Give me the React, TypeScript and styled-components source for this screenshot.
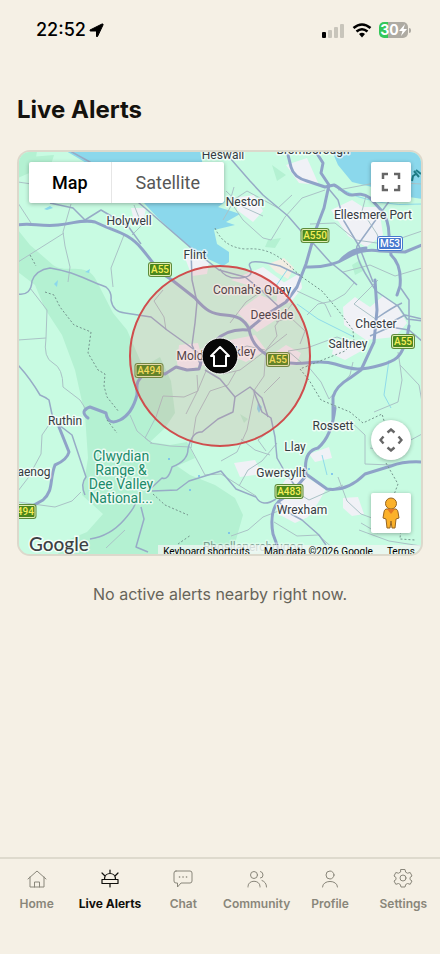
import React from "react";
import styled, { createGlobalStyle, css } from "styled-components";

const Global = createGlobalStyle`
  * { box-sizing: border-box; }
  body { margin: 0; background: #f5f0e5; }
  button { font: inherit; border: 0; padding: 0; cursor: pointer; }
`;

const Page = styled.div`
  min-height: 100vh;
  display: flex;
  flex-direction: column;
  background: #f5f0e5;
  font-family: Inter, "Liberation Sans", sans-serif;
  color: #14120d;
`;

const StatusBar = styled.header`
  display: flex;
  align-items: center;
  justify-content: space-between;
  height: 60px;
  padding: 0 29px 0 36px;
`;

const StatusGroup = styled.div<{ $gap: number }>`
  display: flex;
  align-items: center;
  gap: ${(p) => p.$gap}px;
`;

const Time = styled.time`
  font-size: 18px;
  font-weight: 500;
  line-height: 24px;
  color: #000;
`;

const Battery = styled.div`
  display: flex;
  align-items: center;
  gap: 1px;
`;

const BatteryBody = styled.div`
  display: flex;
  align-items: center;
  justify-content: center;
  width: 29px;
  height: 16px;
  border-radius: 5px;
  background: linear-gradient(90deg, #34c759 30%, #aeaba3 30%);
  color: #fff;
  font-size: 14px;
  font-weight: 700;
  line-height: 16px;
`;

const BatteryCap = styled.span`
  width: 2px;
  height: 5px;
  border-radius: 0 2px 2px 0;
  background: #aeaba3;
`;

const Main = styled.main`
  flex: 1;
  padding: 32px 17px 0;
`;

const Title = styled.h1`
  margin: 0 0 23px;
  font-size: 24px;
  line-height: 35px;
  font-weight: 700;
`;

const MapCard = styled.section`
  position: relative;
  aspect-ratio: 1;
  overflow: hidden;
  border: 2px solid #dcd9cc;
  border-radius: 13px;
  background: #c6fae0;
  font-family: Roboto, "Liberation Sans", sans-serif;
`;

const MapSvg = styled.svg`
  display: block;
  width: 100%;
  height: 100%;
`;

const MapTypes = styled.div`
  position: absolute;
  top: 10px;
  left: 10px;
  display: flex;
  height: 41px;
  border-radius: 2px;
  background: #fff;
  box-shadow: 0 1px 4px rgba(0, 0, 0, 0.3);
`;

const MapType = styled.button<{ $active?: boolean }>`
  padding: 0 24px;
  background: transparent;
  font-size: 18px;
  color: #565656;
  ${(p) =>
    p.$active &&
    css`
      padding: 0 23px;
      border-right: 1px solid #e6e6e6;
      font-weight: 500;
      color: #000;
    `}
`;

const MapControl = styled.button<{ $top?: number; $bottom?: number; $round?: boolean }>`
  position: absolute;
  right: 10px;
  ${(p) => (p.$top !== undefined ? `top: ${p.$top}px;` : `bottom: ${p.$bottom}px;`)}
  display: grid;
  place-items: center;
  width: 40px;
  height: 40px;
  border-radius: ${(p) => (p.$round ? "50%" : "2px")};
  background: #fff;
  box-shadow: 0 1px 4px rgba(0, 0, 0, 0.3);
`;

const GoogleMark = styled.a`
  position: absolute;
  left: 10px;
  bottom: -2px;
  font-family: Lato, sans-serif;
  font-size: 19px;
  font-weight: 500;
  line-height: 24px;
  color: #3c4043;
  text-decoration: none;
  -webkit-text-stroke: 3px rgba(255, 255, 255, 0.8);
  paint-order: stroke fill;
`;

const Attribution = styled.div`
  position: absolute;
  right: 0;
  bottom: 0;
  display: flex;
  gap: 14px;
  height: 9px;
  padding: 0 6px 0 5px;
  overflow: hidden;
  background: rgba(245, 245, 245, 0.7);
  font-size: 10px;
  line-height: 14px;
  color: #000;
`;

const AttributionButton = styled.button`
  height: 14px;
  background: transparent;
  color: #000;
`;

const AttributionLink = styled.a`
  color: #000;
  text-decoration: none;
`;

const Empty = styled.p`
  margin: 26px 0 0;
  text-align: center;
  font-size: 16px;
  line-height: 24px;
  color: #67645a;
`;

const TabBar = styled.nav`
  display: grid;
  grid-template-columns: repeat(6, 1fr);
  padding: 9px 0 41px;
  border-top: 2px solid #dedacd;
`;

const Tab = styled.a<{ $active?: boolean }>`
  display: flex;
  flex-direction: column;
  align-items: center;
  gap: 6px;
  height: 45px;
  font-size: 12px;
  font-weight: ${(p) => (p.$active ? 700 : 600)};
  line-height: 16px;
  white-space: nowrap;
  text-decoration: none;
  color: ${(p) => (p.$active ? "#100f0b" : "#89867a")};
`;

const TabIcon = styled.svg`
  width: 22px;
  height: 22px;
  flex: none;
  fill: none;
  stroke: currentColor;
  stroke-linecap: round;
  stroke-linejoin: round;
`;

const majorRoads = [
  "M18 225C30 222 40 227 58 225S84 219 95 222C115 232 128 232 142 249S158 272 172 280L195 298C206 311 212 314 225 315S244 319 249 329C252 347 266 357 284 362S316 358 335 364S360 371 381 365S400 353 406 343L409 326",
  "M288 155L291 167C293 175 300 179 307 181L325 187L334 185C341 188 346 196 352 195S363 193 370 198L381 210Q389 220 389 235L391 255Q402 265 400 286L397 295",
  "M316 152L323 163L321 173L329 185L324 208L316 229L306 264L297 287L286 302L266 315L249 329",
  "M306 267Q330 268 346 258T380 251L405 252L422 245M340 261Q350 249 366 248",
  "M88 418Q79 411 90 407L106 413Q108 426 120 420T137 395L137 385Q138 377 150 371L165 374L176 367L187 370L199 369Q202 354 215 341T248 330",
  "M59 427L69 452Q67 460 55 465C49 481 54 490 43 500L18 514",
  "M333 420L333 397Q336 386 350 378L361 370L374 342L377 310L375 280M335 408Q332 436 318 448Q303 451 306 474L327 489Q347 492 365 474L391 466Q404 461 422 462",
  "M305 477Q292 493 279 501Q269 511 273 534L280 553",
];

const mediumRoads = [
  "M357 246Q355 256 365 273L376 291L398 306L407 319L422 321M400 287L409 300L409 327M386 325L405 315L422 319M377 318Q393 307 402 303M370 336L390 327L409 330L422 341",
  "M230 158L250 181L263 195L288 216L301 231L313 243L330 262L345 274L357 285",
  "M328 188L338 200L344 221L359 246L373 282M390 200L357 246",
  "M18 294Q31 296 32 281Q36 270 50 268C75 272 84 279 106 287Q112 292 111 300Q113 312 125 313L151 317L167 330L188 345L205 358",
  "M59 425L72 435L86 477Q80 484 85 495",
  "M18 365Q30 378 40 395Q45 397 49 400L53 419",
  "M70 151L90 162L145 208L191 248L219 270L245 277L260 289L278 306",
  "M220 269Q225 279 240 278T250 267T280 266L301 276",
  "M191 250L192 280L197 302L195 323L192 345L201 366",
  "M148 491L162 478Q168 481 172 467Q188 461 188 449Q192 431 202 432L218 419L233 412L235 397",
  "M152 491L177 490L189 481L221 471L236 489L256 497Q262 508 276 499",
  "M254 392L262 412L271 418L275 437L277 458L285 472L301 494",
  "M90 539Q110 536 124 520T135 500M141 507L144 519L136 547L148 552",
  "M205 370L220 379L235 397L250 387L262 398L268 417",
  "M279 502L291 514L302 520L319 535L326 545",
  "M50 203L73 208L85 220L101 210L128 226L141 244",
];

const minorRoads = [
  "M18 182L45 186L52 204M18 203L31 223",
  "M71 204L63 232L65 246L70 267L68 282M64 233L18 262",
  "M124 235L111 268L113 287M134 205L142 225L132 235",
  "M223 220L235 199L247 191L278 208L292 195M226 191L243 207L263 216",
  "M234 187L230 201L243 220L263 238L271 240L285 217L302 198L325 190",
  "M310 224L335 223L356 240L384 244L422 231",
  "M366 196L362 211L377 234L382 250M338 190L380 182L422 184",
  "M18 340L46 338Q43 358 53 363T63 387L80 400L87 411",
  "M30 288L47 310L46 338M53 419L42 435L41 454L28 478L18 491",
  "M18 502L55 507L72 501L81 492",
  "M163 290L154 301L164 317L166 330",
  "M197 375L198 391L184 397L163 396L156 417L145 438L152 443",
  "M206 371L198 390L186 414M223 374L240 370L264 352L287 334",
  "M236 371L228 385L210 391L196 417L191 448",
  "M253 392L264 376L266 350L277 336L275 326L292 304",
  "M255 390L247 430L237 452L221 461",
  "M190 447L205 475L221 474L256 496M130 415L137 431L150 442",
  "M277 443L262 461L248 470L239 486M271 430L258 440L266 451",
  "M307 365L321 382L329 399L350 375L353 362",
  "M302 363L288 351L307 348L337 337L358 345",
  "M398 352L400 365L419 385L422 402M400 365L402 380L398 402L374 412",
  "M349 420L365 435L365 464L391 465M422 434L390 451L370 448",
  "M307 315L318 304L333 301L345 294L354 283",
  "M338 477L347 501L361 514L372 518L378 533L361 523",
  "M291 489L309 500L343 485M274 522L297 536L318 535L335 550",
  "M241 439L255 450L270 455M150 443L170 446L190 447",
  "M234 350L247 346L265 350M230 323L246 302L265 289L279 292",
  "M276 322L290 317L305 331L300 344M297 291L325 304L331 317",
  "M343 272L370 265L395 276L422 268M378 280L354 304L377 320",
  "M231 536L248 530L263 517L281 510M359 530L389 541L421 546",
  "M106 548L125 530M280 377L264 393",
];

const border = [
  "M215 228Q224 248 246 249Q269 247 286 263L302 277L322 291L338 310L353 330L354 342L345 351L300 369L309 380L321 400L350 412L363 423L382 414L385 424",
  "M386 463L398 484L392 500L402 514L400 539L415 540",
  "M45 292L54 295L60 307L74 325L91 332L88 353L98 370L105 374L104 386L107 397L119 412",
  "M30 255L36 266M153 494L165 505L188 515M107 420L117 433M178 544L191 535",
];

const towns = [
  "M286 165L307 158L319 185L299 183Z",
  "M239 197L254 195L263 211L253 222L237 210Z",
  "M331 210L352 200L363 207L379 207L383 235L366 247L348 236Z",
  "M343 307L355 297L370 307L383 296L397 306L407 323L395 337L366 340L344 325Z",
  "M335 341L358 341L363 350L345 360L332 354Z",
  "M286 479L306 477L326 489L318 503L308 517L295 523L280 515L277 492Z",
  "M234 463L255 460L262 474L240 477Z",
  "M343 498L358 497L364 514L352 516L343 508Z",
  "M179 345L198 343L204 365L184 371L177 364Z",
  "M230 340L255 335L266 350L246 362L232 356Z",
  "M231 280L263 267L289 286L278 293L257 288Z",
  "M237 312L260 295L282 304L274 321L257 332L250 325Z",
  "M267 358L286 345L301 353L296 365L280 366Z",
  "M131 208L146 208L143 224L135 225Z",
  "M183 253L209 262L207 274L192 276Z",
  "M278 286L300 273L302 288L291 302L276 307Z",
  "M309 454L329 447L332 458L315 462Z",
];

type Place = { name: string; x: number; y: number; faded?: boolean };
const places: Place[] = [
  { name: "Heswall", x: 223, y: 159 },
  { name: "Bromborough", x: 313, y: 154 },
  { name: "Neston", x: 245, y: 206 },
  { name: "Ellesmere Port", x: 373, y: 219 },
  { name: "Holywell", x: 129, y: 225 },
  { name: "Flint", x: 195, y: 259 },
  { name: "Connah's Quay", x: 252, y: 294 },
  { name: "Deeside", x: 272, y: 319 },
  { name: "Chester", x: 376, y: 328 },
  { name: "Saltney", x: 348, y: 348 },
  { name: "Mold", x: 190, y: 360 },
  { name: "Buckley", x: 235, y: 356 },
  { name: "Ruthin", x: 65, y: 425 },
  { name: "aenog", x: 34, y: 476 },
  { name: "Rossett", x: 333, y: 430 },
  { name: "Llay", x: 295, y: 451 },
  { name: "Gwersyllt", x: 281, y: 477 },
  { name: "Wrexham", x: 302, y: 514 },
  { name: "Rhosllanerchrugog", x: 253, y: 551, faded: true },
];

const shields = [
  { name: "A55", x: 160, y: 270, w: 20 },
  { name: "A550", x: 315, y: 236, w: 25 },
  { name: "M53", x: 390, y: 244, w: 22, blue: true },
  { name: "A55", x: 403, y: 342, w: 20 },
  { name: "A55", x: 278, y: 360, w: 20 },
  { name: "A494", x: 149, y: 371, w: 25 },
  { name: "A483", x: 289, y: 492, w: 25 },
  { name: "A494", x: 22, y: 512, w: 25 },
];

const Label = styled.text`
  font-size: 12px;
  fill: #363b42;
  stroke: #fff;
  stroke-width: 3px;
  stroke-opacity: 0.7;
  stroke-linejoin: round;
  paint-order: stroke;
  text-anchor: middle;
`;

const ParkLabel = styled(Label)`
  font-size: 14px;
  fill: #1b8a6b;
`;

const ShieldText = styled.text<{ $blue?: boolean }>`
  font-size: 10px;
  font-weight: 500;
  fill: ${(p) => (p.$blue ? "#fff" : "#f5ee5a")};
  text-anchor: middle;
`;

function MapDrawing() {
  return (
    <MapSvg viewBox="19 152 402 402" preserveAspectRatio="xMidYMid slice" role="img" aria-label="Map of nearby alerts">
      <rect x="10" y="140" width="430" height="430" fill="#c8fbe2" />
      <g fill="#b4f1d2">
        <path d="M18 230L30 245L53 265C65 274 85 262 95 278L113 313L127 330L143 367L160 357L171 381L175 413L165 428L150 442L170 445L187 442L195 458L177 466L190 475L215 485L235 498L243 515L232 554H58L63 542L87 532L103 514L82 495L88 458L85 415L75 370L62 335L45 309L35 285L18 272Z" />
        <path d="M18 151H37L34 171L18 178ZM30 157L54 155L50 168L37 169Z" />
        <path d="M268 240L281 238L275 248L265 247ZM352 265L360 260L365 270L355 275ZM272 165L286 175L277 181ZM240 414L248 419L244 423Z" />
      </g>
      <g fill="#f0f1f6">
        {towns.map((d) => <path key={d} d={d} />)}
      </g>
      <path d="M268 264L284 258L294 268L288 279L276 272Z" fill="#f3ede3" />
      <g fill="#8bd8ec">
        <path d="M66 151H200L203 166L225 202L218 207L231 211L240 214L226 222L235 225L214 230L217 244L229 252L229 262L223 266L204 257L190 247L172 231L158 218L144 203L110 177Z" />
        <path d="M332 151H422V199L402 196L372 187L352 182L338 165Z" />
        <path d="M44 209L50 206L53 208L47 210ZM85 272L90 269L89 273ZM54 284L58 280L57 287ZM258 402L262 407L259 413L257 409Z" />
      </g>
      <path
        d="M297 304L318 319L354 337M339 188Q374 208 422 204M389 360L384 395L391 408M327 475L322 455M276 286L287 270"
        fill="none"
        stroke="#8fdbea"
        strokeWidth="1"
      />
      <g fill="#6fb8ef">
        <circle cx="169" cy="459" r="1" /><circle cx="190" cy="490" r="1" /><circle cx="199" cy="476" r="1" />
        <circle cx="309" cy="469" r="1" /><circle cx="332" cy="474" r="1" /><circle cx="229" cy="533" r="1" />
      </g>
      <g fill="none" stroke="#aac2c6" strokeWidth="1" strokeLinejoin="round">
        {minorRoads.map((d) => <path key={d} d={d} />)}
      </g>
      <g fill="none" stroke="#97abc6" strokeWidth="1.5" strokeLinejoin="round">
        {mediumRoads.map((d) => <path key={d} d={d} />)}
      </g>
      <g fill="none" stroke="#8fa3c8" strokeWidth="3" strokeLinejoin="round" strokeLinecap="round">
        {majorRoads.map((d) => <path key={d} d={d} />)}
      </g>
      <g fill="none" stroke="#74948d" strokeWidth="1" strokeDasharray="2 2">
        {border.map((d) => <path key={d} d={d} />)}
      </g>
      <path d="M412 181L413 176L416 174M414 171L419 177M416 170L421 174" stroke="#207e88" strokeWidth="2" fill="none" />
      {places.map((p) => (
        <Label key={p.name} x={p.x} y={p.y} opacity={p.faded ? 0.45 : 1}>{p.name}</Label>
      ))}
      {["Clwydian", "Range &", "Dee Valley", "National..."].map((line, i) => (
        <ParkLabel key={line} x="121" y={461 + i * 14}>{line}</ParkLabel>
      ))}
      {shields.map((s) => (
        <g key={s.name + s.x}>
          <rect x={s.x - s.w / 2 - 2} y={s.y - 8} width={s.w + 4} height="15" rx="3" fill={s.blue ? "#4779cf" : "#5d8b3b"} />
          <rect x={s.x - s.w / 2 - 1} y={s.y - 7} width={s.w + 2} height="13" rx="2" fill={s.blue ? "#fff" : "#e3eeb4"} />
          <rect x={s.x - s.w / 2} y={s.y - 6} width={s.w} height="11" rx="1" fill={s.blue ? "#4779cf" : "#4a861c"} />
          <ShieldText $blue={s.blue} x={s.x} y={s.y + 3}>{s.name}</ShieldText>
        </g>
      ))}
      <circle cx="220" cy="356" r="90" fill="#e56f6f" fillOpacity="0.17" stroke="#cf4d4d" strokeWidth="2" />
      <circle cx="220" cy="356" r="18" fill="#080808" stroke="#fff" strokeWidth="1" />
      <path d="M211 356L220 347L229 356H226V366H214V356Z" fill="none" stroke="#fff" strokeWidth="2" strokeLinejoin="round" />
    </MapSvg>
  );
}

const tabs = [
  { label: "Home", icon: <path d="M2 11L11 3L20 11M4 9V19H18V9M8.5 19V14H13.5V19" /> },
  {
    label: "Live Alerts",
    active: true,
    icon: <path strokeWidth="1.2" d="M11 2V5M3 5L5.5 7.5M19 5L16.5 7.5M5.5 11.5C5.5 3.5 16.5 3.5 16.5 11.5M3 11.5H19V15.5H3ZM11 15.5V19" />,
  },
  {
    label: "Chat",
    icon: (
      <>
        <path d="M4 3H18Q20 3 20 5V13Q20 15 18 15H9L5.5 19V15H4Q2 15 2 13V5Q2 3 4 3Z" />
        <path strokeWidth="1.6" d="M7.5 9H7.6M11 9H11.1M14.5 9H14.6" />
      </>
    ),
  },
  {
    label: "Community",
    icon: (
      <>
        <circle cx="8" cy="7" r="3.5" />
        <path d="M2 19V18.5C2 11.500 14 11.500 14 18.5V19M14.5 3.5Q17 4 17 7T14.5 10M16 12.5Q20.5 14 20.5 19" />
      </>
    ),
  },
  {
    label: "Profile",
    icon: (
      <>
        <circle cx="11" cy="7" r="4" />
        <path d="M3.5 19C3.5 11.5 18.5 11.5 18.5 19" />
      </>
    ),
  },
  {
    label: "Settings",
    icon: (
      <>
        <circle cx="11" cy="10" r="3" />
        <path d="M9 1.5H13L13.7 4.2L15.5 5.2L18.2 4.500L20 8L18 9.5V11.5L20 13L18.2 16.3L15.5 15.5L13.7 16.5L13 19H9L8.3 16.5L6.5 15.5L3.8 16.3L2 13L4 11.5V9.5L2 8L3.8 4.5L6.5 5.2L8.3 4.2Z" />
      </>
    ),
  },
];

export default function App() {
  return (
    <Page>
      <Global />
      <StatusBar>
        <StatusGroup $gap={3}>
          <Time>22:52</Time>
          <svg width="15" height="15" viewBox="0 0 15 15" aria-label="Location in use">
            <path d="M1 7L13 1Q14.5 0.5 14 2L8.5 13.5Q8 14.5 7.5 13.5V8H1.5Q0.5 7.500 1 7Z" fill="#000" stroke="#000" strokeLinejoin="round" />
          </svg>
        </StatusGroup>
        <StatusGroup $gap={7}>
          <svg width="23" height="15" viewBox="0 0 23 15" aria-label="Signal">
            <rect x="0" y="9" width="4" height="6" rx="1" fill="#000" />
            <rect x="6" y="7" width="4" height="8" rx="1" fill="#c8c5bb" />
            <rect x="12" y="4" width="4" height="11" rx="1" fill="#c8c5bb" />
            <rect x="18" y="1" width="4" height="14" rx="1" fill="#c8c5bb" />
          </svg>
          <svg width="20" height="15" viewBox="0 0 20 15" aria-label="Wi-Fi">
            <path d="M1.5 5Q10 -2 18.5 5M4.5 8.5Q10 4 15.5 8.5" fill="none" stroke="#000" strokeWidth="2.6" />
            <path d="M7 11Q10 8.5 13 11L10 14.5Z" fill="#000" />
          </svg>
          <Battery>
            <BatteryBody>
              30
              <svg width="8" height="12" viewBox="0 0 8 12" aria-label="Charging">
                <path d="M6 0L0 7H3.5L2 12L8 5H4.5Z" fill="#fff" />
              </svg>
            </BatteryBody>
            <BatteryCap />
          </Battery>
        </StatusGroup>
      </StatusBar>

      <Main>
        <Title>Live Alerts</Title>
        <MapCard>
          <MapDrawing />
          <MapTypes>
            <MapType $active>Map</MapType>
            <MapType>Satellite</MapType>
          </MapTypes>
          <MapControl $top={10} aria-label="Toggle fullscreen">
            <svg width="20" height="20" viewBox="0 0 20 20">
              <path d="M2 7V2H7M13 2H18V7M18 13V18H13M7 18H2V13" fill="none" stroke="#666" strokeWidth="2.5" />
            </svg>
          </MapControl>
          <MapControl $bottom={94} $round aria-label="Map camera controls">
            <svg width="24" height="24" viewBox="0 0 24 24">
              <path d="M8.5 4.5L12 1.5L15.5 4.5M8.5 19.5L12 22.5L15.5 19.5M4.5 8.5L1.5 12L4.5 15.5M19.5 8.5L22.5 12L19.5 15.5" fill="none" stroke="#666" strokeWidth="2.4" />
            </svg>
          </MapControl>
          <MapControl $bottom={21} aria-label="Street View">
            <svg width="20" height="32" viewBox="0 0 20 32">
              <g fill="#fbb12a" stroke="#966521" strokeWidth="1" strokeLinejoin="round">
                <path d="M5 12H15Q17 13 17 15L18 21L15 22L14 31H11L10 24L9 31H6L5 22L2 21L3 15Q3 13 5 12Z" />
                <circle cx="10" cy="6.5" r="5.5" />
              </g>
              <path d="M6 12L10 17L14 12Z" fill="#e37825" />
            </svg>
          </MapControl>
          <GoogleMark href="#google">Google</GoogleMark>
          <Attribution>
            <AttributionButton>Keyboard shortcuts</AttributionButton>
            <span>Map data ©2026 Google</span>
            <AttributionLink href="#terms">Terms</AttributionLink>
          </Attribution>
        </MapCard>
        <Empty>No active alerts nearby right now.</Empty>
      </Main>

      <TabBar aria-label="Main">
        {tabs.map((t) => (
          <Tab key={t.label} href={"#" + t.label.toLowerCase().replace(" ", "-")} $active={t.active} aria-current={t.active ? "page" : undefined}>
            <TabIcon viewBox="0 0 22 22" aria-hidden="true">{t.icon}</TabIcon>
            {t.label}
          </Tab>
        ))}
      </TabBar>
    </Page>
  );
}
